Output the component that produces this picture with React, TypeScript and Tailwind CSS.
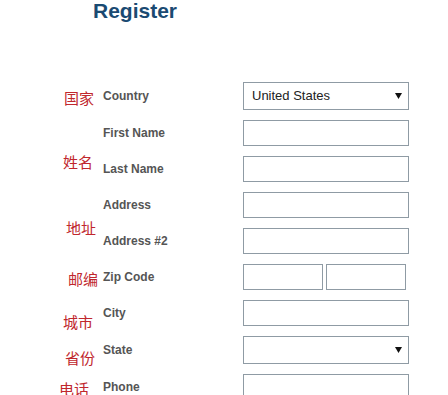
import React from 'react';

type Row = {
  label: string;
  kind: 'input' | 'select' | 'zip';
  value?: string;
};

const rows: Row[] = [
  { label: 'Country', kind: 'select', value: 'United States' },
  { label: 'First Name', kind: 'input' },
  { label: 'Last Name', kind: 'input' },
  { label: 'Address', kind: 'input' },
  { label: 'Address #2', kind: 'input' },
  { label: 'Zip Code', kind: 'zip' },
  { label: 'City', kind: 'input' },
  { label: 'State', kind: 'select', value: '' },
  { label: 'Phone', kind: 'input' },
];

const Arrow = () => (
  <svg
    className="pointer-events-none absolute right-[7px] top-1/2 -translate-y-1/2"
    width="7"
    height="6"
    viewBox="0 0 7 6"
  >
    <polygon points="0,0 7,0 3.5,6" fill="#111" />
  </svg>
);

const Field = ({ row }: { row: Row }) => {
  if (row.kind === 'select') {
    return (
      <div className="relative h-[28px] w-[166px]">
        <select
          defaultValue={row.value}
          className="h-full w-full appearance-none border border-[#8f9ba4] bg-white pl-2 text-[13px] text-[#222] outline-none"
        >
          <option value="United States">United States</option>
          <option value=""></option>
        </select>
        <Arrow />
      </div>
    );
  }
  if (row.kind === 'zip') {
    return (
      <div className="flex gap-[3px]">
        <input className="h-[26px] w-[80px] border border-[#8f9ba4] bg-white outline-none" />
        <input className="h-[26px] w-[80px] border border-[#8f9ba4] bg-white outline-none" />
      </div>
    );
  }
  return <input className="h-[26px] w-[166px] border border-[#8f9ba4] bg-white outline-none" />;
};

const cjk =
  "col-start-1 self-start justify-self-end text-[15px] leading-none text-[#c0272d] [font-family:'Noto_Sans_CJK_SC',sans-serif]";

const App: React.FC = () => {
  return (
    <div
      className="h-[395px] w-[448px] overflow-hidden bg-white"
      style={{ fontFamily: '"Liberation Sans", Arial, sans-serif' }}
    >
      {/* 标题 */}
      <h1 className="ml-[93px] text-[21px] font-bold leading-none text-[#1a4a72]">Register</h1>

      {/* 表单 */}
      <div className="mt-[61px] ml-[40px] grid grid-cols-[63px_140px_166px] grid-rows-[28px_26px_26px_26px_26px_26px_26px_28px_26px] gap-y-[10px]">
        {/* 中文标注 */}
        <span className={`${cjk} row-start-1 mt-[8px] mr-[9px]`}>国家</span>
        <span className={`${cjk} row-start-2 mt-[34px] mr-[10px]`}>姓名</span>
        <span className={`${cjk} row-start-4 mt-[28px] mr-[7px]`}>地址</span>
        <span className={`${cjk} row-start-6 mt-[7px] mr-[5px]`}>邮编</span>
        <span className={`${cjk} row-start-7 mt-[14px] mr-[10px]`}>城市</span>
        <span className={`${cjk} row-start-8 mt-[14px] mr-[8px]`}>省份</span>
        <span className={`${cjk} row-start-9 mt-[7px] mr-[14px]`}>电话</span>

        {rows.map((row, i) => (
          <React.Fragment key={row.label}>
            <label
              className="col-start-2 self-center text-[12px] font-bold leading-none text-[#555]"
              style={{ gridRowStart: i + 1 }}
            >
              {row.label}
            </label>
            <div className="col-start-3 self-center" style={{ gridRowStart: i + 1 }}>
              <Field row={row} />
            </div>
          </React.Fragment>
        ))}
      </div>
    </div>
  );
};

export default App;
